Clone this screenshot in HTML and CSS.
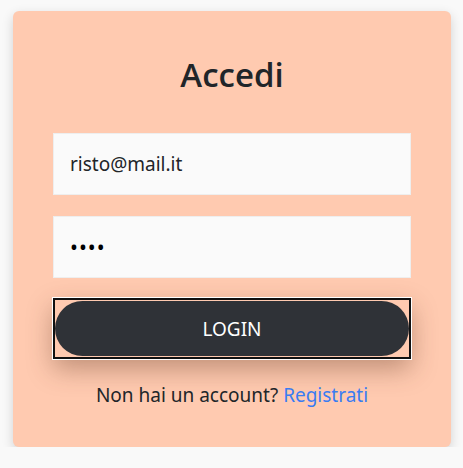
FILE: index.html
```html
<!DOCTYPE html>
<html lang="it">
<head>
<meta charset="utf-8">
<title>Accedi</title>
<link rel="stylesheet" href="styles.css">
</head>
<body>
<div class="card">
  <h2 class="title">Accedi</h2>
  <form class="form">
    <div class="field">risto@mail.it</div>
    <div class="field pwd">&#8226;&#8226;&#8226;&#8226;</div>
    <div class="btn-frame"><button type="button" class="btn">LOGIN</button></div>
  </form>
  <p class="footer">Non hai un account? <a href="#" class="link">Registrati</a></p>
</div>
</body>
</html>
```
FILE: styles.css
```css
* { box-sizing: border-box; }
html, body { margin: 0; padding: 0; }
body {
  background: #f9f9f9;
  font-family: "Noto Sans", "Open Sans", sans-serif;
  color: #212529;
  padding: 11px 12px 0 13px;
}
.card {
  width: 438px;
  height: 436px;
  background: #ffcab0;
  border-radius: 6px;
  box-shadow: 0 4px 12px rgba(0,0,0,0.16);
  padding: 45px 40px 0 40px;
}
.title {
  margin: 0 0 39px 0;
  text-align: center;
  font-family: "Open Sans", "Noto Sans", sans-serif;
  font-size: 33px;
  font-weight: 600;
  line-height: 38px;
  color: #212529;
}
.form {
  display: flex;
  flex-direction: column;
  gap: 21px;
}
.field {
  height: 62px;
  background: #fafafa;
  border: 1px solid #eeeeee;
  padding: 0 16px;
  display: flex;
  align-items: center;
  font-size: 19px;
  color: #212529;
}
.pwd { font-size: 21px; letter-spacing: 1px; color: #000; }
.btn-frame {
  margin-top: -1px;
  height: 61px;
  border: 2px solid #111111;
  outline: 1px solid #ffffff;
  padding: 1px 0;
  box-shadow: 0 10px 26px rgba(90,50,30,0.38);
}
.btn {
  display: block;
  width: 100%;
  height: 100%;
  border: none;
  border-radius: 30px;
  background: #2f3237;
  color: #ffffff;
  font-family: inherit;
  font-size: 19px;
  padding: 0;
}
.footer {
  margin: 23px 0 0 0;
  text-align: center;
  font-size: 19px;
  line-height: 27px;
  color: #212529;
}
.link { color: #3a7cf2; text-decoration: none; }
```
